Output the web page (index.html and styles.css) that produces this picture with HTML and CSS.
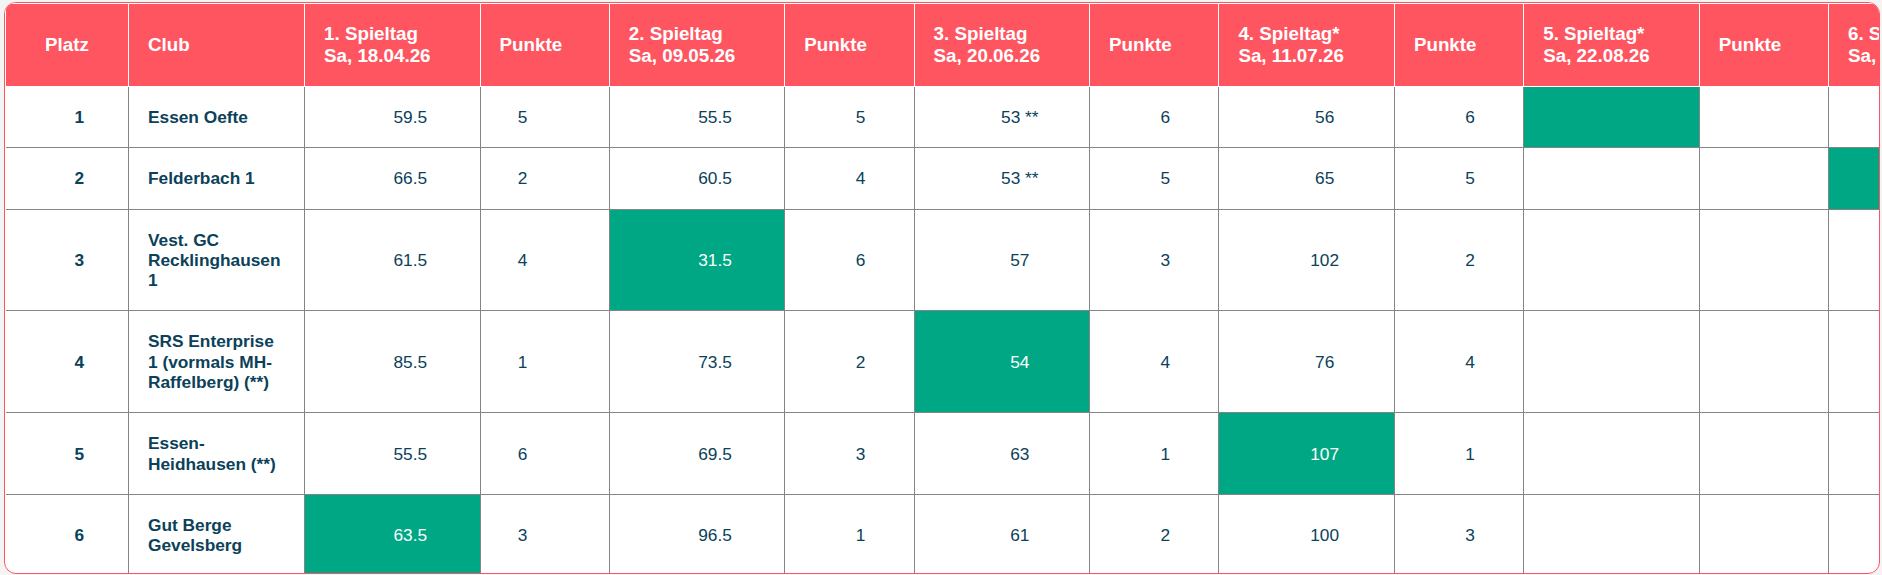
FILE: index.html
```html
<!DOCTYPE html>
<html lang="de">
<head>
<meta charset="utf-8">
<title>Tabelle</title>
<link rel="stylesheet" href="styles.css">
</head>
<body>
<div class="frame">
  <table class="standings">
    <colgroup>
      <col class="c-platz">
      <col class="c-club">
      <col class="c-tag"><col class="c-pkt">
      <col class="c-tag"><col class="c-pkt">
      <col class="c-tag"><col class="c-pkt">
      <col class="c-tag"><col class="c-pkt">
      <col class="c-tag"><col class="c-pkt">
      <col class="c-tag"><col class="c-pkt">
      <col class="c-pkt">
    </colgroup>
    <thead>
      <tr>
        <th class="h-platz">Platz</th>
        <th>Club</th>
        <th>1. Spieltag<br>Sa, 18.04.26</th>
        <th>Punkte</th>
        <th>2. Spieltag<br>Sa, 09.05.26</th>
        <th>Punkte</th>
        <th>3. Spieltag<br>Sa, 20.06.26</th>
        <th>Punkte</th>
        <th>4. Spieltag*<br>Sa, 11.07.26</th>
        <th>Punkte</th>
        <th>5. Spieltag*<br>Sa, 22.08.26</th>
        <th>Punkte</th>
        <th>6. Spieltag<br>Sa, 19.09.26</th>
        <th>Punkte</th>
        <th>Gesamt</th>
      </tr>
    </thead>
    <tbody>
      <tr>
        <td class="platz">1</td>
        <td class="club">Essen Oefte</td>
        <td class="tag">59.5</td><td class="pkt pkt1">5</td>
        <td class="tag">55.5</td><td class="pkt">5</td>
        <td class="tag">53 **</td><td class="pkt">6</td>
        <td class="tag">56</td><td class="pkt">6</td>
        <td class="tag host"></td><td class="pkt"></td>
        <td class="tag"></td><td class="pkt"></td>
        <td class="pkt"></td>
      </tr>
      <tr>
        <td class="platz">2</td>
        <td class="club">Felderbach 1</td>
        <td class="tag">66.5</td><td class="pkt pkt1">2</td>
        <td class="tag">60.5</td><td class="pkt">4</td>
        <td class="tag">53 **</td><td class="pkt">5</td>
        <td class="tag">65</td><td class="pkt">5</td>
        <td class="tag"></td><td class="pkt"></td>
        <td class="tag host"></td><td class="pkt"></td>
        <td class="pkt"></td>
      </tr>
      <tr>
        <td class="platz">3</td>
        <td class="club">Vest. GC Recklinghausen 1</td>
        <td class="tag">61.5</td><td class="pkt pkt1">4</td>
        <td class="tag host">31.5</td><td class="pkt">6</td>
        <td class="tag">57</td><td class="pkt">3</td>
        <td class="tag">102</td><td class="pkt">2</td>
        <td class="tag"></td><td class="pkt"></td>
        <td class="tag"></td><td class="pkt"></td>
        <td class="pkt"></td>
      </tr>
      <tr>
        <td class="platz">4</td>
        <td class="club">SRS Enterprise 1 (vormals MH-Raffelberg) (**)</td>
        <td class="tag">85.5</td><td class="pkt pkt1">1</td>
        <td class="tag">73.5</td><td class="pkt">2</td>
        <td class="tag host">54</td><td class="pkt">4</td>
        <td class="tag">76</td><td class="pkt">4</td>
        <td class="tag"></td><td class="pkt"></td>
        <td class="tag"></td><td class="pkt"></td>
        <td class="pkt"></td>
      </tr>
      <tr>
        <td class="platz">5</td>
        <td class="club">Essen-Heidhausen (**)</td>
        <td class="tag">55.5</td><td class="pkt pkt1">6</td>
        <td class="tag">69.5</td><td class="pkt">3</td>
        <td class="tag">63</td><td class="pkt">1</td>
        <td class="tag host">107</td><td class="pkt">1</td>
        <td class="tag"></td><td class="pkt"></td>
        <td class="tag"></td><td class="pkt"></td>
        <td class="pkt"></td>
      </tr>
      <tr>
        <td class="platz">6</td>
        <td class="club">Gut Berge Gevelsberg</td>
        <td class="tag host">63.5</td><td class="pkt pkt1">3</td>
        <td class="tag">96.5</td><td class="pkt">1</td>
        <td class="tag">61</td><td class="pkt">2</td>
        <td class="tag">100</td><td class="pkt">3</td>
        <td class="tag"></td><td class="pkt"></td>
        <td class="tag"></td><td class="pkt"></td>
        <td class="pkt"></td>
      </tr>
    </tbody>
  </table>
</div>
</body>
</html>
```

FILE: styles.css
```css
html, body {
  margin: 0;
  padding: 0;
}

body {
  background: #f4f4f4;
  padding: 2px 2px 0 4px;
  font-family: "Liberation Sans", Arial, sans-serif;
  color: #0b4159;
}

.frame {
  border: 1px solid #ff5561;
  border-radius: 12px;
  background: #ffffff;
  overflow: hidden;
  height: 570px;
}

.standings {
  border-collapse: collapse;
  table-layout: fixed;
  width: 2257px;
}

.c-platz { width: 123px; }
.c-club { width: 176px; }
.c-tag { width: 175.5px; }
.c-pkt { width: 129.3px; }

.standings th {
  background: #ff5561;
  color: #ffffff;
  font-size: 18.8px;
  font-weight: bold;
  line-height: 22px;
  text-align: left;
  vertical-align: middle;
  padding: 19px 20px 19px 19px;
  border: 1px solid #ffffff;
  white-space: nowrap;
}

.standings th.h-platz {
  text-align: center;
  padding-left: 20px;
  padding-right: 20px;
}

.standings td {
  font-size: 17.3px;
  line-height: 20.3px;
  padding: 20px 10px;
  border: 1px solid #858585;
  vertical-align: middle;
  text-align: center;
}

.standings td:first-child {
  border-left: 0;
}

.platz {
  font-weight: bold;
  padding-left: 45px !important;
  padding-right: 20px !important;
}

.club {
  font-weight: bold;
  text-align: left !important;
  padding-left: 19px !important;
  padding-right: 20px !important;
}

.tag {
  padding-left: 46px !important;
  padding-right: 10px !important;
}

.pkt {
  padding-left: 32px !important;
  padding-right: 10px !important;
}

.pkt1 {
  padding-left: 10px !important;
  padding-right: 54px !important;
}

.host {
  background: #00a784;
  color: #ffffff;
}
```
